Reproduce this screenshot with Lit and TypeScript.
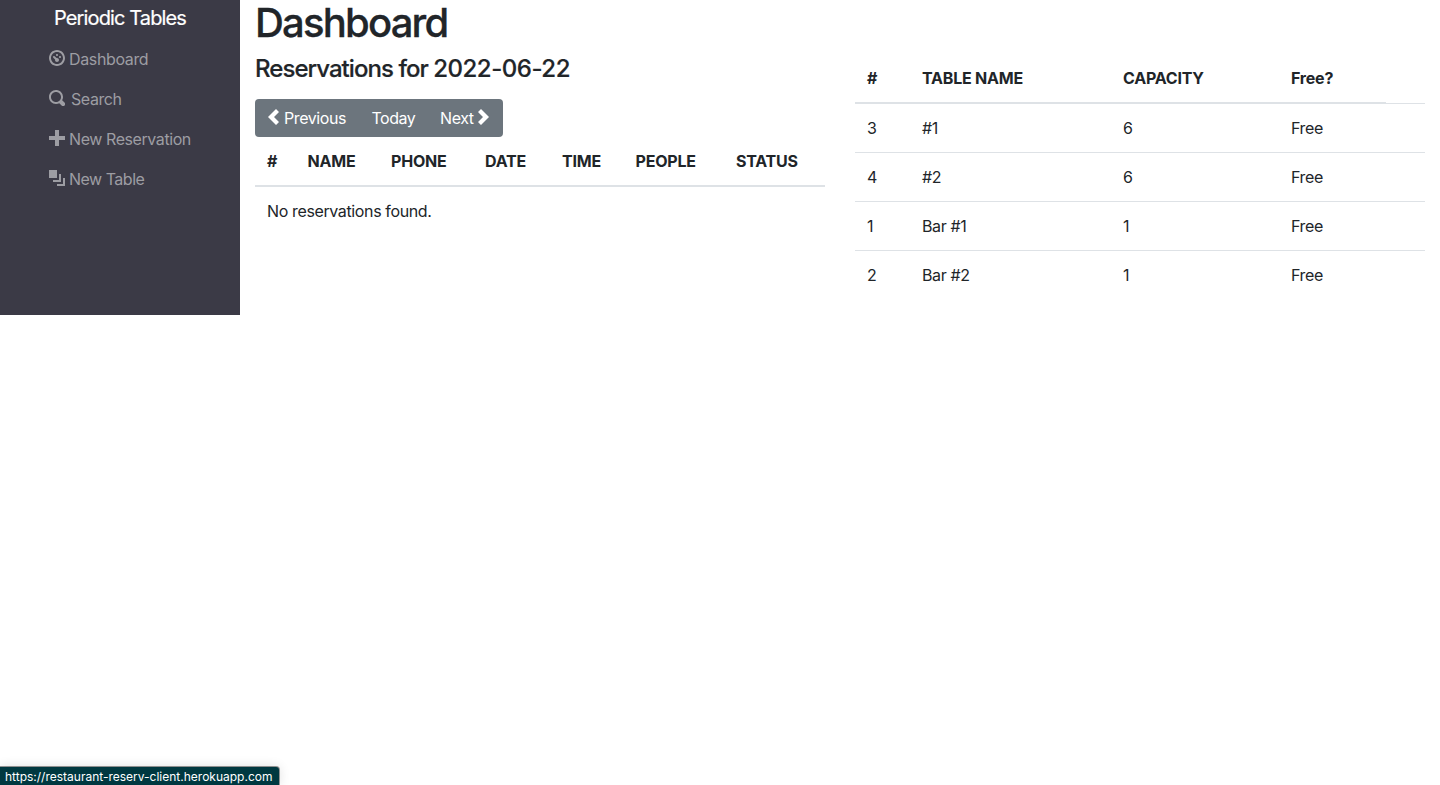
import { LitElement, html, css, svg } from "lit";
import { customElement } from "lit/decorators.js";

const ICONS: Record<string, string> = {
  dashboard:
    "M4 0c-2.2 0-4 1.8-4 4s1.8 4 4 4 4-1.8 4-4-1.8-4-4-4zm0 1c1.66 0 3 1.34 3 3s-1.34 3-3 3-3-1.34-3-3 1.34-3 3-3zm0 1c-.28 0-.5.22-.5.5s.22.5.5.5.5-.22.5-.5-.22-.5-.5-.5zm-1.66 1a.5.5 0 0 0-.19.84l.91.91c-.02.08-.06.16-.06.25 0 .55.45 1 1 1s1-.45 1-1-.45-1-1-1c-.09 0-.17.04-.25.06l-.91-.91a.5.5 0 0 0-.44-.16.5.5 0 0 0-.06 0zm3.16 0c-.28 0-.5.22-.5.5s.22.5.5.5.5-.22.5-.5-.22-.5-.5-.5z",
  search:
    "M3.5 0c-1.93 0-3.5 1.57-3.5 3.5s1.57 3.5 3.5 3.5c.59 0 1.17-.14 1.66-.41a1 1 0 0 0 .13.13l1 1a1.02 1.02 0 1 0 1.44-1.44l-1-1a1 1 0 0 0-.16-.13c.27-.49.44-1.06.44-1.66 0-1.93-1.55-3.5-3.5-3.5zm0 1c1.39 0 2.5 1.11 2.5 2.5 0 .66-.24 1.27-.66 1.72l-.03.03a1 1 0 0 0-.13.13c-.44.4-1.04.63-1.69.63-1.39 0-2.5-1.11-2.5-2.5s1.11-2.5 2.5-2.5z",
  plus: "M3 0v3h-3v2h3v3h2v-3h3v-2h-3v-3h-2z",
  layers: "M0 0v4h4v-4h-4zm5 2v3h-3v1h4v-4h-1zm2 2v3h-3v1h4v-4h-1z",
  left: "M5 0l-4 4 4 4 1.5-1.5-2.5-2.5 2.5-2.5-1.5-1.5z",
  right: "M2.5 0l-1.5 1.5 2.5 2.5-2.5 2.5 1.5 1.5 4-4-4-4z",
};

const icon = (name: string) => html`<svg class="icon" viewBox="0 0 8 8" width="16" height="16" aria-hidden="true">
  ${svg`<path fill="currentColor" d=${ICONS[name]}></path>`}
</svg>`;

const LINKS = [
  { icon: "dashboard", label: "Dashboard", cls: "t-dash" },
  { icon: "search", label: "Search", cls: "t-search" },
  { icon: "plus", label: "New Reservation", cls: "t-newres" },
  { icon: "layers", label: "New Table", cls: "t-newtab" },
];

const TABLES = [
  [3, "#1", 6, "Free"],
  [4, "#2", 6, "Free"],
  [1, "Bar #1", 1, "Free"],
  [2, "Bar #2", 1, "Free"],
];

@customElement("app-root")
export class AppRoot extends LitElement {
  static styles = css`
    :host {
      display: block;
      height: 785px;
      position: relative;
      background: #fff;
      color: #212529;
      font: 400 16px/24px Inter, "Liberation Sans", sans-serif;
      letter-spacing: -0.37px;
    }
    * { box-sizing: border-box; }
    .page { display: grid; grid-template-columns: 240px 1fr; }
    .side {
      background: #3b3a46;
      color: #9d9da3;
      display: flex;
      flex-direction: column;
      align-items: center;
    }
    .brand {
      height: 39px;
      padding-top: 3px;
      font-size: 20px;
      line-height: 30px;
      color: #fff;
      letter-spacing: -0.88px;
      white-space: nowrap;
      -webkit-text-stroke: 0.2px currentColor;
    }
    .links { width: 142px; display: flex; flex-direction: column; letter-spacing: -0.42px; }
    .link { height: 40px; padding-top: 8px; display: flex; white-space: nowrap; }
    .link .icon { margin: 3px 4px 0 0; }
    .link .t-search { margin-left: 2px; }
    .link .t-dash { letter-spacing: -0.36px; }
    .link .t-newtab { letter-spacing: -0.5px; }
    .icon { display: block; flex: none; }
    .main { padding: 0 15px; }
    h1 { margin: 0 0 8px; font-size: 40px; line-height: 46px; font-weight: 500; letter-spacing: -1.8px; height: 46px; -webkit-text-stroke: 0.3px currentColor; }
    .cols { display: grid; grid-template-columns: 570px 570px; gap: 30px; }
    h4 { margin: 0 0 16px; font-size: 24px; line-height: 29px; font-weight: 500; letter-spacing: -0.95px; -webkit-text-stroke: 0.2px currentColor; }
    .date { letter-spacing: -0.48px; }
    .group { display: flex; width: 248px; height: 38px; background: #6c757d; color: #fff; border-radius: 4px; }
    .btn { display: flex; padding-top: 7px; white-space: nowrap; letter-spacing: -0.42px; }
    .btn .icon { margin-top: 3px; }
    .prev { width: 104.5px; padding-left: 11px; }
    .prev .icon { margin-right: 2px; }
    .today { width: 68px; padding-left: 12px; letter-spacing: -0.5px; }
    .next { padding-left: 12.5px; }
    .next .icon { margin-left: 2px; }
    table { width: 570px; border-collapse: collapse; table-layout: fixed; margin-bottom: 16px; }
    th, td { padding: 12px; text-align: left; vertical-align: top; white-space: nowrap; border-top: 1px solid #dee2e6; }
    th { font-weight: 700; border-top: 0; border-bottom: 2px solid #dee2e6; letter-spacing: -0.22px; }
    .plain td { border-top: 0; }
    .c1 { width: 40.5px; } .c2 { width: 83.5px; } .c3 { width: 94px; } .c4 { width: 77px; }
    .c5 { width: 73.5px; } .c6 { width: 100.5px; } .c7 { width: 101px; }
    .d1 { width: 55px; } .d2 { width: 201px; } .d3 { width: 168px; } .d4 { width: 107px; } .d5 { width: 39px; }
    .status {
      position: absolute;
      left: 0;
      bottom: 0;
      width: 279px;
      height: 18px;
      padding-left: 5px;
      background: #003840;
      color: #fff;
      border-top-right-radius: 3px;
      box-shadow: 0 0 0 1px rgba(0, 0, 0, 0.4), 0 0 12px rgba(0, 0, 0, 0.14);
      clip-path: inset(-20px -20px 0 0);
      font-size: 12px;
      line-height: 19px;
      letter-spacing: 0;
      white-space: nowrap;
    }
  `;

  render() {
    return html`
      <div class="page">
        <nav class="side">
          <div class="brand"><span>Periodic Tables</span></div>
          <div class="links">
            ${LINKS.map((l) => html`<a class="link">${icon(l.icon)}<span class=${l.cls}>${l.label}</span></a>`)}
          </div>
        </nav>
        <main class="main">
          <h1>Dashboard</h1>
          <div class="cols">
            <section>
              <h4>Reservations for <span class="date">2022-06-22</span></h4>
              <div class="group">
                <a class="btn prev">${icon("left")}<span>Previous</span></a>
                <a class="btn today"><span>Today</span></a>
                <a class="btn next"><span>Next</span>${icon("right")}</a>
              </div>
              <table class="plain">
                <colgroup>${[1, 2, 3, 4, 5, 6, 7].map((n) => html`<col class="c${n}" />`)}</colgroup>
                <thead>
                  <tr>${["#", "NAME", "PHONE", "DATE", "TIME", "PEOPLE", "STATUS"].map((t) => html`<th>${t}</th>`)}</tr>
                </thead>
                <tbody>
                  <tr><td colspan="7">No reservations found.</td></tr>
                </tbody>
              </table>
            </section>
            <section>
              <table>
                <colgroup>${[1, 2, 3, 4, 5].map((n) => html`<col class="d${n}" />`)}</colgroup>
                <thead>
                  <tr>${["#", "TABLE NAME", "CAPACITY", "Free?"].map((t) => html`<th>${t}</th>`)}</tr>
                </thead>
                <tbody>
                  ${TABLES.map((r) => html`<tr>${r.map((c) => html`<td>${c}</td>`)}<td></td></tr>`)}
                </tbody>
              </table>
            </section>
          </div>
        </main>
      </div>
      <div class="status">https://restaurant-reserv-client.herokuapp.com</div>
    `;
  }
}
